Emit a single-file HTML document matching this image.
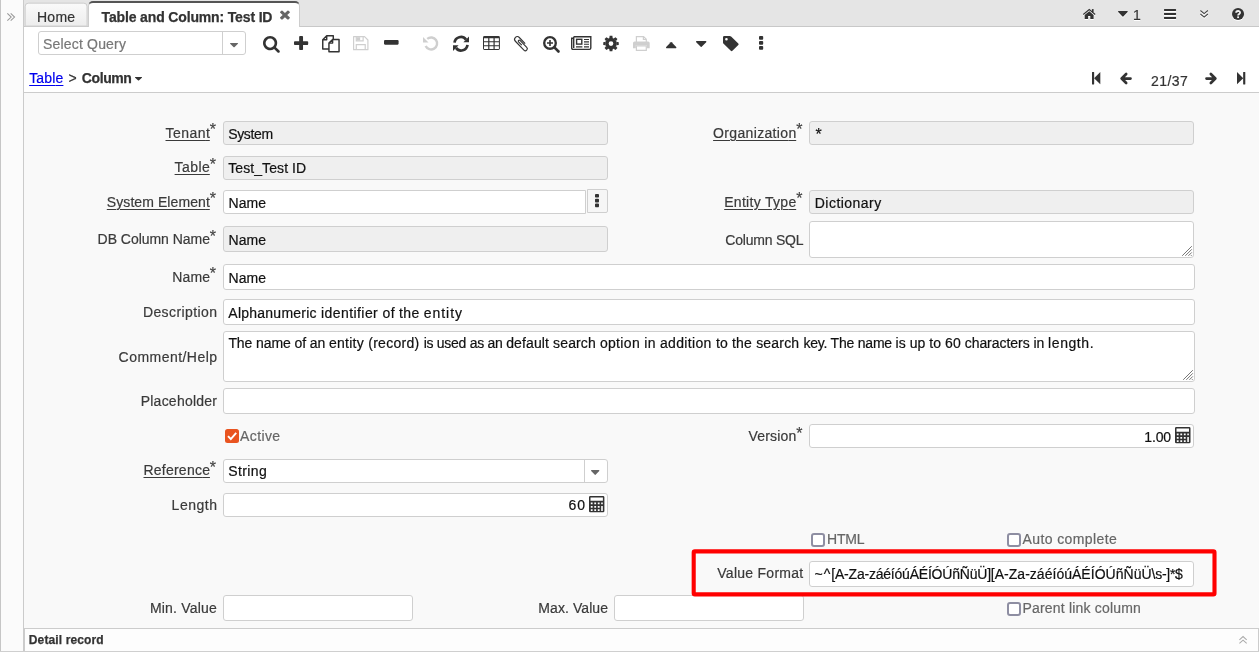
<!DOCTYPE html>
<html lang="en"><head><meta charset="utf-8"><title>Table and Column: Test ID</title>
<style>
html,body{margin:0;padding:0;background:#f9f9f9;}
body{width:1259px;height:652px;overflow:hidden;position:relative;font-family:"Liberation Sans", sans-serif;}
#app{position:absolute;left:0;top:0;width:1259px;height:652px;overflow:hidden;will-change:transform;}
#app div,#app svg,#app span{position:absolute;box-sizing:border-box;}
#app svg{overflow:visible;}
#app span{white-space:pre;line-height:20px;height:20px;-webkit-text-stroke:0.2px currentColor;}
#app span.u{text-decoration:underline;text-underline-offset:2px;text-decoration-thickness:1px;}
</style></head><body><div id="app">
<div style="left:24px;top:27px;width:1235px;height:65px;background:#fff;"></div>
<div style="left:24px;top:0px;width:1235px;height:27px;background:#e5e5e5;border-bottom:1px solid #c8c8c8;"></div>
<div style="left:0px;top:0px;width:24px;height:652px;background:#fbfbfb;border-right:1px solid #cbcbcb;border-left:1px solid #c6c6c6;"></div>
<svg style="left:6.9px;top:13px;color:#999" width="7.7" height="8.1" viewBox="0 0 7.7 8.1" preserveAspectRatio="none" fill="currentColor"><path d="M0.35 0.35 L4.2 4.05 L0.35 7.75 M3.7 0.35 L7.55 4.05 L3.7 7.75" fill="none" stroke="currentColor" stroke-width="1.05"/></svg>
<div style="left:25px;top:3px;width:63px;height:24px;background:linear-gradient(#fafafa,#ededed);border:1px solid #cfcfcf;border-radius:4px 4px 0 0;transform:translate(-0.4px,-0.4px);"></div>
<span id="t0" style="left:37px;top:6.7px;font-size:14px;color:#333;letter-spacing:0.247px;">Home</span>
<div style="left:88.4px;top:1px;width:211.2px;height:26px;background:#fff;border:1px solid #cdcdcd;border-top:2px solid #555;border-bottom:none;border-radius:5px 5px 0 0;"></div>
<span id="t1" style="left:101.6px;top:7px;font-size:14px;color:#333;font-weight:700;-webkit-text-stroke:0.25px currentColor;letter-spacing:-0.15px;">Table and Column: Test ID</span>
<svg style="left:280px;top:9.7px;color:#666" width="9.9" height="9.6" viewBox="302 302 1188 1252" preserveAspectRatio="none" fill="currentColor"><path d="M1490 1322q0 40-28 68l-136 136q-28 28-68 28t-68-28l-294-294-294 294q-28 28-68 28t-68-28l-136-136q-28-28-28-68t28-68l294-294-294-294q-28-28-28-68t28-68l136-136q28-28 68-28t68 28l294 294 294-294q28-28 68-28t68 28l136 136q28 28 28 68t-28 68l-294 294 294 294q28 28 28 68z"/></svg>
<svg style="left:1082.5px;top:8.95px;color:#333;filter:drop-shadow(0 1px 0 #fff)" width="12.5" height="10" viewBox="0 0 12.5 10" preserveAspectRatio="none" fill="currentColor"><path d="M0.3 5.5 L6.25 0.5 L12.2 5.5" fill="none" stroke="currentColor" stroke-width="1.1"/><path d="M1.7 6 L6.25 2.2 L10.6 6 V10 H7.3 V7 H5.1 V10 H1.7 Z"/><rect x="8.9" y="0.1" width="1.7" height="3.2"/></svg>
<svg style="left:1117.8px;top:11.4px;color:#333;filter:drop-shadow(0 1px 0 #fff)" width="9.8" height="5.6" viewBox="384 640 1024 576" preserveAspectRatio="none" fill="currentColor"><path d="M1408 704q0 26-19 45l-448 448q-19 19-45 19t-45-19l-448-448q-19-19-19-45t19-45 45-19h896q26 0 45 19t19 45z"/></svg>
<span id="t2" style="left:1132.9px;top:4.9px;font-size:14px;color:#333;text-shadow:0 1px 0 #fff;">1</span>
<svg style="left:1163.9px;top:9px;color:#333;filter:drop-shadow(0 1px 0 #fff)" width="12.1" height="9.9" viewBox="128 256 1536 1280" preserveAspectRatio="none" fill="currentColor"><path d="M1664 1344v128q0 26-19 45t-45 19h-1408q-26 0-45-19t-19-45v-128q0-26 19-45t45-19h1408q26 0 45 19t19 45zm0-512v128q0 26-19 45t-45 19h-1408q-26 0-45-19t-19-45v-128q0-26 19-45t45-19h1408q26 0 45 19t19 45zm0-512v128q0 26-19 45t-45 19h-1408q-26 0-45-19t-19-45v-128q0-26 19-45t45-19h1408q26 0 45 19t19 45z"/></svg>
<svg style="left:1199.9px;top:9.8px;color:#444;filter:drop-shadow(0 1px 0 #fff)" width="8.3" height="7.6" viewBox="0 0 8 7.6" preserveAspectRatio="none" fill="currentColor"><path d="M0.4 0.5 L4 3.6 L7.6 0.5 M0.4 4 L4 7.1 L7.6 4" fill="none" stroke="currentColor" stroke-width="1"/></svg>
<svg style="left:1232px;top:8px;color:#333;filter:drop-shadow(0 1px 0 #fff)" width="12.1" height="12.1" viewBox="0 0 12 12" preserveAspectRatio="none" fill="currentColor"><circle cx="6" cy="6" r="6"/><path d="M4.1 4.7 C4.1 2.4 8 2.4 8 4.6 C8 5.9 6.05 5.9 6.05 7.5" fill="none" stroke="#f0f0f0" stroke-width="1.8"/><rect x="5.15" y="8.3" width="1.8" height="1.7" fill="#f0f0f0"/></svg>
<div style="left:38px;top:31px;width:208px;height:24px;background:#fff;border:1px solid #cfcfcf;border-radius:3px;"></div>
<div style="left:222px;top:32px;width:1px;height:22px;background:#cfcfcf;"></div>
<svg style="left:230px;top:42.8px;color:#666" width="8.1" height="4.3" viewBox="384 640 1024 576" preserveAspectRatio="none" fill="currentColor"><path d="M1408 704q0 26-19 45l-448 448q-19 19-45 19t-45-19l-448-448q-19-19-19-45t19-45 45-19h896q26 0 45 19t19 45z"/></svg>
<span id="t3" style="left:43.1px;top:33.7px;font-size:14px;color:#777;letter-spacing:0.169px;">Select Query</span>
<svg style="left:262.8px;top:35.9px;color:#333" width="16.8" height="16.8" viewBox="64 128 1664 1664" preserveAspectRatio="none" fill="currentColor"><path d="M1216 832q0-185-131.500-316.500t-316.500-131.500-316.500 131.500-131.500 316.500 131.500 316.500 316.500 131.500 316.500-131.500 131.500-316.500zm512 832q0 52-38 90t-90 38q-54 0-90-38l-343-342q-179 124-399 124-143 0-273.500-55.500t-225-150-150-225-55.500-273.500 55.500-273.500 150-225 225-150 273.500-55.500 273.500 55.500 225 150 150 225 55.500 273.500q0 220-124 399l343 343q37 37 37 90z"/></svg>
<svg style="left:293.9px;top:35.9px;color:#333" width="14.2" height="14.1" viewBox="192 128 1408 1408" preserveAspectRatio="none" fill="currentColor"><path d="M1600 736v192q0 40-28 68t-68 28h-416v416q0 40-28 68t-68 28h-192q-40 0-68-28t-28-68v-416h-416q-40 0-68-28t-28-68v-192q0-40 28-68t68-28h416v-416q0-40 28-68t68-28h192q40 0 68 28t28 68v416h416q40 0 68 28t28 68z"/></svg>
<svg style="left:322px;top:34.6px;color:#333" width="17.8" height="17.5" viewBox="0 0 17.8 17.5" preserveAspectRatio="none" fill="currentColor"><path d="M4.7 0.75 H11.3 V4.2 M7 14 H0.75 V4.7 L4.7 0.75 V4.7 H0.75" fill="none" stroke="currentColor" stroke-width="1.45" stroke-linejoin="round"/><path d="M10.6 4.45 H17.05 V16.75 H6.95 V8.1 L10.6 4.45 V8.1 H6.95" fill="none" stroke="currentColor" stroke-width="1.45" stroke-linejoin="round"/></svg>
<svg style="left:353.2px;top:36.2px;color:#cfcfcf" width="15.5" height="14.3" viewBox="0 0 15.6 14.4" preserveAspectRatio="none" fill="currentColor"><path d="M0.6 0.6 H11.6 L15 4 V13.8 H0.6 Z" fill="none" stroke="currentColor" stroke-width="1.2" stroke-linejoin="round"/><path d="M3.3 0.6 V5 H10.2 V0.6 M3.3 13.8 V8.6 H12.3 V13.8" fill="none" stroke="currentColor" stroke-width="1.2"/><rect x="3.9" y="1.2" width="3.3" height="3.2"/></svg>
<svg style="left:383.9px;top:40.3px;color:#333" width="14.6" height="4.7" viewBox="192 640 1408 384" preserveAspectRatio="none" fill="currentColor"><path d="M1600 736v192q0 40-28 68t-68 28h-1216q-40 0-68-28t-28-68v-192q0-40 28-68t68-28h1216q40 0 68 28t28 68z"/></svg>
<svg style="left:423.1px;top:35.9px;color:#cfcfcf" width="15.3" height="14.9" viewBox="0 0 15.3 14.9" preserveAspectRatio="none" fill="currentColor"><path d="M4.24 2.85 A6 6 0 1 1 2.66 9.99" fill="none" stroke="currentColor" stroke-width="2.4"/><path d="M0 0.9 V6.4 H5.5 Z"/></svg>
<svg style="left:453.1px;top:35.7px;color:#333" width="16" height="15.5" viewBox="0 0 16 15.5" preserveAspectRatio="none" fill="currentColor"><path d="M1.5 6.6 A6.4 6.4 0 0 1 13 3.6" fill="none" stroke="currentColor" stroke-width="2.7"/><path d="M16 0.6 V6.2 H10.4 Z"/><path d="M14.5 8.9 A6.4 6.4 0 0 1 3 11.9" fill="none" stroke="currentColor" stroke-width="2.7"/><path d="M0 14.9 V9.3 H5.6 Z"/></svg>
<svg style="left:482.9px;top:35.9px;color:#333" width="16.9" height="14.1" viewBox="0 0 16.9 14.2" preserveAspectRatio="none" fill="currentColor"><path fill-rule="evenodd" d="M1.5 0 H15.4 Q16.9 0 16.9 1.5 V12.7 Q16.9 14.2 15.4 14.2 H1.5 Q0 14.2 0 12.7 V1.5 Q0 0 1.5 0 Z M1 2.3 V5.2 H5.2 V2.3 Z M6.4 2.3 V5.2 H10.5 V2.3 Z M11.7 2.3 V5.2 H15.9 V2.3 Z M1 6.3 V9.2 H5.2 V6.3 Z M6.4 6.3 V9.2 H10.5 V6.3 Z M11.7 6.3 V9.2 H15.9 V6.3 Z M1 10.3 V13.2 H5.2 V10.3 Z M6.4 10.3 V13.2 H10.5 V10.3 Z M11.7 10.3 V13.2 H15.9 V10.3 Z"/></svg>
<svg style="left:514.1px;top:35.7px;color:#333" width="14.3" height="15.5" viewBox="0 0 14.3 15.5" preserveAspectRatio="none" fill="currentColor"><g transform="translate(3.4 -0.45) rotate(46)"><path d="M11.2 0 H2.7 A2.7 2.7 0 0 0 2.7 5.4 H15.0 A1.95 1.95 0 0 0 15.0 1.5 H5.3 A1 1 0 0 0 5.3 3.5 H10" fill="none" stroke="currentColor" stroke-width="1.15"/></g></svg>
<svg style="left:542.8px;top:35.9px;color:#333" width="16.8" height="16.8" viewBox="0 0 16.8 16.8" preserveAspectRatio="none" fill="currentColor"><circle cx="7" cy="7" r="5.8" fill="none" stroke="currentColor" stroke-width="2.35"/><path d="M11.4 11.4 L15.5 15.5" stroke="currentColor" stroke-width="2.6" stroke-linecap="round"/><path d="M4 7 H10 M7 4 V10" stroke="currentColor" stroke-width="1.6"/></svg>
<svg style="left:570.7px;top:35.9px;color:#333" width="20.5" height="14.1" viewBox="0 0 20.5 14.1" preserveAspectRatio="none" fill="currentColor"><path d="M2.7 0.7 H19.8 V12 Q19.8 13.4 18.4 13.4 H2.1 Q0.7 13.4 0.7 12 V2.2 H2.7 M2.7 0.7 V12" fill="none" stroke="currentColor" stroke-width="1.4"/><rect x="5.6" y="3.3" width="5.2" height="4.8" fill="none" stroke="currentColor" stroke-width="1.4"/><path d="M13 3.5 H18 M13 5.9 H18 M13 8.3 H18 M5 10.9 H11.4 M13 10.9 H18" stroke="currentColor" stroke-width="1.15"/></svg>
<svg style="left:602.9px;top:35.9px;color:#333" width="16" height="15.2" viewBox="0 0 16 15.2" preserveAspectRatio="none" fill="currentColor"><path fill-rule="evenodd" d="M2.25 7.60 a5.75 5.75 0 1 0 11.50 0 a5.75 5.75 0 1 0 -11.50 0 Z M5.65 7.60 a2.35 2.35 0 1 1 4.70 0 a2.35 2.35 0 1 1 -4.70 0 Z"/><path d="M6.25 2.20 L6.65 -0.15 L9.35 -0.15 L9.75 2.20 Z"/><path d="M10.58 2.54 L12.53 1.17 L14.43 3.07 L13.06 5.02 Z"/><path d="M13.40 5.85 L15.75 6.25 L15.75 8.95 L13.40 9.35 Z"/><path d="M13.06 10.18 L14.43 12.13 L12.53 14.03 L10.58 12.66 Z"/><path d="M9.75 13.00 L9.35 15.35 L6.65 15.35 L6.25 13.00 Z"/><path d="M5.42 12.66 L3.47 14.03 L1.57 12.13 L2.94 10.18 Z"/><path d="M2.60 9.35 L0.25 8.95 L0.25 6.25 L2.60 5.85 Z"/><path d="M2.94 5.02 L1.57 3.07 L3.47 1.17 L5.42 2.54 Z"/></svg>
<svg style="left:633.2px;top:35.9px;color:#cfcfcf" width="16.7" height="14.9" viewBox="0 0 16.7 14.9" preserveAspectRatio="none" fill="currentColor"><path d="M3.4 6 V0.6 H10.6 L13.3 3.3 V6 M10.4 0.6 V3.5 H13.3" fill="none" stroke="currentColor" stroke-width="1.2"/><path d="M1.6 5.5 H15.1 Q16.7 5.5 16.7 7.1 V12.2 H13.9 V9.2 H2.8 V12.2 H0 V7.1 Q0 5.5 1.6 5.5 Z"/><path d="M3.4 9.8 H13.3 V14.3 H3.4 Z" fill="none" stroke="currentColor" stroke-width="1.2"/></svg>
<svg style="left:665.8px;top:41.6px;color:#333" width="10.4" height="6.3" viewBox="384 704 1024 576" preserveAspectRatio="none" fill="currentColor"><path d="M1408 1216q0 26-19 45t-45 19h-896q-26 0-45-19t-19-45 19-45l448-448q19-19 45-19t45 19l448 448q19 19 19 45z"/></svg>
<svg style="left:695.8px;top:41px;color:#333" width="10.4" height="6" viewBox="384 640 1024 576" preserveAspectRatio="none" fill="currentColor"><path d="M1408 704q0 26-19 45l-448 448q-19 19-45 19t-45-19l-448-448q-19-19-19-45t19-45 45-19h896q26 0 45 19t19 45z"/></svg>
<svg style="left:722.9px;top:35.9px;color:#333" width="15.8" height="15.3" viewBox="0 0 15.6 15.6" preserveAspectRatio="none" fill="currentColor"><path fill-rule="evenodd" d="M0 1.3 Q0 0 1.3 0 H6.6 Q7.4 0 8 0.6 L15.1 7.7 Q15.9 8.5 15.1 9.3 L9.3 15.1 Q8.5 15.9 7.7 15.1 L0.6 8 Q0 7.4 0 6.6 Z M3.4 2.1 A1.3 1.3 0 1 0 3.4 4.7 A1.3 1.3 0 1 0 3.4 2.1 Z"/></svg>
<svg style="left:758.9px;top:36.2px;color:#333" width="4.2" height="13.8" viewBox="704 128 384 1408" preserveAspectRatio="none" fill="currentColor"><path d="M1088 1248v192q0 40-28 68t-68 28h-192q-40 0-68-28t-28-68v-192q0-40 28-68t68-28h192q40 0 68 28t28 68zm0-512v192q0 40-28 68t-68 28h-192q-40 0-68-28t-28-68v-192q0-40 28-68t68-28h192q40 0 68 28t28 68zm0-512v192q0 40-28 68t-68 28h-192q-40 0-68-28t-28-68v-192q0-40 28-68t68-28h192q40 0 68 28t28 68z"/></svg>
<div style="left:24px;top:92px;width:1235px;height:1px;background:#cccccc;"></div>
<span id="t4" class="u" style="left:29.2px;top:67.8px;font-size:14px;color:#0000ee;letter-spacing:0.183px;">Tabl<i style="font-style:normal;letter-spacing:0">e</i></span>
<span id="t5" style="left:68.5px;top:67.8px;font-size:14px;color:#333;">&gt;</span>
<span id="t6" style="left:81.8px;top:67.8px;font-size:14px;color:#333;font-weight:700;-webkit-text-stroke:0.25px currentColor;letter-spacing:-0.402px;">Column</span>
<svg style="left:134.7px;top:77px;color:#333" width="7" height="3.6" viewBox="384 640 1024 576" preserveAspectRatio="none" fill="currentColor"><path d="M1408 704q0 26-19 45l-448 448q-19 19-45 19t-45-19l-448-448q-19-19-19-45t19-45 45-19h896q26 0 45 19t19 45z"/></svg>
<svg style="left:1091.9px;top:71.8px;color:#333" width="8.3" height="12.4" viewBox="0 0 8.3 12.4" preserveAspectRatio="none" fill="currentColor"><rect x="0" y="0" width="2.15" height="12.4" rx="0.3"/><path d="M8.3 0.1 L2.1 6.2 L8.3 12.3 Z"/></svg>
<svg style="left:1120.3px;top:72px;color:#333" width="12" height="13.1" viewBox="0 0 12 13.1" preserveAspectRatio="none" fill="currentColor"><path d="M10.5 6.55 H2 M6.15 2.05 L1.65 6.55 L6.15 11.05" fill="none" stroke="currentColor" stroke-width="2.7" stroke-linecap="round" stroke-linejoin="round"/></svg>
<span id="t7" style="left:1151px;top:70.8px;font-size:14px;color:#333;letter-spacing:0.413px;">21/37</span>
<svg style="left:1204.9px;top:72px;color:#333" width="12" height="13.1" viewBox="0 0 12 13.1" preserveAspectRatio="none" fill="currentColor"><path d="M1.5 6.55 H10 M5.85 2.05 L10.35 6.55 L5.85 11.05" fill="none" stroke="currentColor" stroke-width="2.7" stroke-linecap="round" stroke-linejoin="round"/></svg>
<svg style="left:1236.8px;top:71.8px;color:#333" width="8.3" height="12.4" viewBox="0 0 8.3 12.4" preserveAspectRatio="none" fill="currentColor"><rect x="6.15" y="0" width="2.15" height="12.4" rx="0.3"/><path d="M0 0.1 L6.2 6.2 L0 12.3 Z"/></svg>
<span id="t8" class="u" style="left:165.5px;top:122.8px;font-size:14px;color:#3a3a3a;letter-spacing:0.451px;">Tenan<i style="font-style:normal;letter-spacing:0">t</i></span>
<span id="t9" style="left:209.7px;top:120.3px;font-size:16px;color:#444;">*</span>
<div style="left:223px;top:121px;width:385px;height:24px;background:#efefef;border:1px solid #cfcfcf;border-radius:3px;"></div>
<span id="t10" style="left:228.2px;top:123.8px;font-size:14px;color:#111;letter-spacing:-0.338px;">System</span>
<span id="t11" class="u" style="left:713.1px;top:122.9px;font-size:14px;color:#3a3a3a;letter-spacing:0.337px;">Organizatio<i style="font-style:normal;letter-spacing:0">n</i></span>
<span id="t12" style="left:796.3px;top:120.3px;font-size:16px;color:#444;">*</span>
<div style="left:809px;top:121px;width:385px;height:24px;background:#efefef;border:1px solid #cfcfcf;border-radius:3px;"></div>
<span id="t13" style="left:815.5px;top:124.6px;font-size:16px;color:#111;">*</span>
<span id="t14" class="u" style="left:174.6px;top:157.2px;font-size:14px;color:#3a3a3a;letter-spacing:0.433px;">Tabl<i style="font-style:normal;letter-spacing:0">e</i></span>
<span id="t15" style="left:209.7px;top:154.7px;font-size:16px;color:#444;">*</span>
<div style="left:223px;top:156px;width:385px;height:24px;background:#efefef;border:1px solid #cfcfcf;border-radius:3px;"></div>
<span id="t16" style="left:228.2px;top:158.4px;font-size:14px;color:#111;letter-spacing:0.088px;">Test_Test ID</span>
<span id="t17" class="u" style="left:106.8px;top:191.8px;font-size:14px;color:#3a3a3a;letter-spacing:0.082px;">System Elemen<i style="font-style:normal;letter-spacing:0">t</i></span>
<span id="t18" style="left:209.7px;top:189.3px;font-size:16px;color:#444;">*</span>
<div style="left:223px;top:190px;width:363px;height:24px;background:#fff;border:1px solid #cfcfcf;border-radius:3px;border-radius:3px 0 0 3px;"></div>
<span id="t19" style="left:228.5px;top:192.7px;font-size:14px;color:#111;letter-spacing:0.08px;">Name</span>
<div style="left:586.5px;top:189px;width:21.5px;height:24px;background:#f6f6f6;border:1px solid #cfcfcf;border-radius:0 2px 2px 0;"></div>
<svg style="left:594.6px;top:194px;color:#333" width="4" height="13.2" viewBox="704 128 384 1408" preserveAspectRatio="none" fill="currentColor"><path d="M1088 1248v192q0 40-28 68t-68 28h-192q-40 0-68-28t-28-68v-192q0-40 28-68t68-28h192q40 0 68 28t28 68zm0-512v192q0 40-28 68t-68 28h-192q-40 0-68-28t-28-68v-192q0-40 28-68t68-28h192q40 0 68 28t28 68zm0-512v192q0 40-28 68t-68 28h-192q-40 0-68-28t-28-68v-192q0-40 28-68t68-28h192q40 0 68 28t28 68z"/></svg>
<span id="t20" class="u" style="left:724.2px;top:191.8px;font-size:14px;color:#3a3a3a;letter-spacing:0.298px;">Entity Typ<i style="font-style:normal;letter-spacing:0">e</i></span>
<span id="t21" style="left:796.3px;top:189.3px;font-size:16px;color:#444;">*</span>
<div style="left:809px;top:190px;width:385px;height:24px;background:#efefef;border:1px solid #cfcfcf;border-radius:3px;"></div>
<span id="t22" style="left:814.8px;top:192.7px;font-size:14px;color:#111;letter-spacing:0.461px;">Dictionary</span>
<span id="t23" style="left:97.6px;top:229.4px;font-size:14px;color:#3a3a3a;letter-spacing:-0.033px;">DB Column Name</span>
<span id="t24" style="left:209.7px;top:226.9px;font-size:16px;color:#444;">*</span>
<div style="left:223px;top:226px;width:385px;height:26px;background:#efefef;border:1px solid #cfcfcf;border-radius:3px;"></div>
<span id="t25" style="left:228.5px;top:229.9px;font-size:14px;color:#111;letter-spacing:0.08px;">Name</span>
<span id="t26" style="left:725.3px;top:229.6px;font-size:14px;color:#3a3a3a;letter-spacing:-0.206px;">Column SQL</span>
<div style="left:809px;top:221px;width:385px;height:37px;background:#fff;border:1px solid #cfcfcf;border-radius:3px;"></div>
<svg style="left:1182px;top:246px" width="10" height="10" viewBox="0 0 10 10"><path d="M9.8 0.2 L0.2 9.8 M9.8 3.3 L3.3 9.8 M9.8 6.4 L6.4 9.8 M9.8 9 L9 9.8" stroke="#666" stroke-width="0.9" fill="none"/></svg>
<span id="t27" style="left:172.3px;top:266.7px;font-size:14px;color:#3a3a3a;letter-spacing:0.114px;">Name</span>
<span id="t28" style="left:209.7px;top:264.2px;font-size:16px;color:#444;">*</span>
<div style="left:223px;top:264px;width:972px;height:26px;background:#fff;border:1px solid #cfcfcf;border-radius:3px;"></div>
<span id="t29" style="left:228.5px;top:267.5px;font-size:14px;color:#111;letter-spacing:0.08px;">Name</span>
<span id="t30" style="left:142.9px;top:302.2px;font-size:14px;color:#3a3a3a;letter-spacing:0.407px;">Description</span>
<div style="left:223px;top:299px;width:972px;height:26px;background:#fff;border:1px solid #cfcfcf;border-radius:3px;"></div>
<span id="t31" style="left:228.3px;top:303px;font-size:14px;color:#111;letter-spacing:0.246px;">Alphanumeric </span>
<span id="t32" style="left:321px;top:303px;font-size:14px;color:#111;letter-spacing:0.426px;">identifier </span>
<span id="t33" style="left:382.5px;top:303px;font-size:14px;color:#111;letter-spacing:0.34px;">of the </span>
<span id="t34" style="left:423.8px;top:303px;font-size:14px;color:#111;letter-spacing:0.946px;">entity</span>
<span id="t35" style="left:118.6px;top:346.8px;font-size:14px;color:#3a3a3a;letter-spacing:0.457px;">Comment/Help</span>
<div style="left:223px;top:331px;width:972px;height:51px;background:#fff;border:1px solid #cfcfcf;border-radius:3px;"></div>
<svg style="left:1183px;top:370px" width="10" height="10" viewBox="0 0 10 10"><path d="M9.8 0.2 L0.2 9.8 M9.8 3.3 L3.3 9.8 M9.8 6.4 L6.4 9.8 M9.8 9 L9 9.8" stroke="#666" stroke-width="0.9" fill="none"/></svg>
<span id="t36" style="left:228.4px;top:333px;font-size:14px;color:#111;letter-spacing:-0.097px;">The name of an </span>
<span id="t37" style="left:328.9px;top:333px;font-size:14px;color:#111;letter-spacing:0.284px;">entity (record) </span>
<span id="t38" style="left:423.7px;top:333px;font-size:14px;color:#111;letter-spacing:-0.278px;">is used as an </span>
<span id="t39" style="left:506.2px;top:333px;font-size:14px;color:#111;letter-spacing:0.124px;">default search </span>
<span id="t40" style="left:599.9px;top:333px;font-size:14px;color:#111;letter-spacing:0.328px;">option in addition </span>
<span id="t41" style="left:715.9px;top:333px;font-size:14px;color:#111;letter-spacing:0.191px;">to the search </span>
<span id="t42" style="left:803.4px;top:333px;font-size:14px;color:#111;letter-spacing:-0.215px;">key. The name </span>
<span id="t43" style="left:895.6px;top:333px;font-size:14px;color:#111;letter-spacing:0.05px;">is up to 60 </span>
<span id="t44" style="left:964.7px;top:333px;font-size:14px;color:#111;letter-spacing:-0.046px;">characters in </span>
<span id="t45" style="left:1048.1px;top:333px;font-size:14px;color:#111;letter-spacing:0.576px;">length.</span>
<span id="t46" style="left:140.7px;top:390.9px;font-size:14px;color:#3a3a3a;letter-spacing:0.236px;">Placeholder</span>
<div style="left:223px;top:388px;width:972px;height:26px;background:#fff;border:1px solid #cfcfcf;border-radius:3px;"></div>
<div style="left:225px;top:429px;width:14px;height:14px;background:#e95420;border-radius:2.5px;"></div>
<svg style="left:225px;top:429px;color:#fff" width="14" height="14" viewBox="0 0 14 14" preserveAspectRatio="none" fill="currentColor"><path d="M3 7.2 L5.8 10 L11.2 3.8" fill="none" stroke="#fff" stroke-width="1.9"/></svg>
<span id="t47" style="left:240.1px;top:425.5px;font-size:14px;color:#666;letter-spacing:0.375px;">Active</span>
<span id="t48" style="left:748.5px;top:426px;font-size:14px;color:#3a3a3a;letter-spacing:0.199px;">Version</span>
<span id="t49" style="left:796.3px;top:423.5px;font-size:16px;color:#444;">*</span>
<div style="left:809px;top:424px;width:385px;height:24px;background:#fff;border:1px solid #cfcfcf;border-radius:3px;"></div>
<span id="t50" style="left:1144.3px;top:427px;font-size:14px;color:#111;letter-spacing:-0.15px;">1.00</span>
<svg style="left:1175.2px;top:426.9px;color:#333" width="15.5" height="16.3" viewBox="0 0 15.4 16.2" preserveAspectRatio="none" fill="currentColor"><path fill-rule="evenodd" d="M1.3 0 H14.1 Q15.4 0 15.4 1.3 V14.9 Q15.4 16.2 14.1 16.2 H1.3 Q0 16.2 0 14.9 V1.3 Q0 0 1.3 0 Z M1.5 1.5 V4.6 H13.9 V1.5 Z M1.8 6.5 V8.2 H3.6 V6.5 Z M5.3 6.5 V8.2 H7.1 V6.5 Z M8.8 6.5 V8.2 H10.6 V6.5 Z M12.2 6.5 V8.2 H13.8 V6.5 Z M1.8 9.9 V11.6 H3.6 V9.9 Z M5.3 9.9 V11.6 H7.1 V9.9 Z M8.8 9.9 V11.6 H10.6 V9.9 Z M12.2 9.9 V14.9 H13.8 V9.9 Z M1.8 13.2 V14.9 H3.6 V13.2 Z M5.3 13.2 V14.9 H7.1 V13.2 Z M8.8 13.2 V14.9 H10.6 V13.2 Z"/></svg>
<span id="t51" class="u" style="left:143.5px;top:459.9px;font-size:14px;color:#3a3a3a;letter-spacing:0.226px;">Referenc<i style="font-style:normal;letter-spacing:0">e</i></span>
<span id="t52" style="left:209.7px;top:457.5px;font-size:16px;color:#444;">*</span>
<div style="left:223px;top:459px;width:385px;height:24px;background:#fff;border:1px solid #cfcfcf;border-radius:3px;"></div>
<span id="t53" style="left:228.2px;top:460.8px;font-size:14px;color:#111;letter-spacing:0.384px;">String</span>
<div style="left:584px;top:460px;width:1px;height:22px;background:#cfcfcf;"></div>
<svg style="left:591.4px;top:469.8px;color:#666" width="8.4" height="4.9" viewBox="384 640 1024 576" preserveAspectRatio="none" fill="currentColor"><path d="M1408 704q0 26-19 45l-448 448q-19 19-45 19t-45-19l-448-448q-19-19-19-45t19-45 45-19h896q26 0 45 19t19 45z"/></svg>
<span id="t54" style="left:171.6px;top:494.8px;font-size:14px;color:#3a3a3a;letter-spacing:0.514px;">Length</span>
<div style="left:223px;top:493px;width:385px;height:24px;background:#fff;border:1px solid #cfcfcf;border-radius:3px;"></div>
<span id="t55" style="left:568.6px;top:495.4px;font-size:14px;color:#111;letter-spacing:0.822px;">60</span>
<svg style="left:588.7px;top:495.8px;color:#333" width="15.4" height="16.3" viewBox="0 0 15.4 16.2" preserveAspectRatio="none" fill="currentColor"><path fill-rule="evenodd" d="M1.3 0 H14.1 Q15.4 0 15.4 1.3 V14.9 Q15.4 16.2 14.1 16.2 H1.3 Q0 16.2 0 14.9 V1.3 Q0 0 1.3 0 Z M1.5 1.5 V4.6 H13.9 V1.5 Z M1.8 6.5 V8.2 H3.6 V6.5 Z M5.3 6.5 V8.2 H7.1 V6.5 Z M8.8 6.5 V8.2 H10.6 V6.5 Z M12.2 6.5 V8.2 H13.8 V6.5 Z M1.8 9.9 V11.6 H3.6 V9.9 Z M5.3 9.9 V11.6 H7.1 V9.9 Z M8.8 9.9 V11.6 H10.6 V9.9 Z M12.2 9.9 V14.9 H13.8 V9.9 Z M1.8 13.2 V14.9 H3.6 V13.2 Z M5.3 13.2 V14.9 H7.1 V13.2 Z M8.8 13.2 V14.9 H10.6 V13.2 Z"/></svg>
<div style="left:811px;top:533px;width:14px;height:14px;background:#fff;border:2px solid #8e8ea2;border-radius:3px;"></div>
<span id="t56" style="left:827.1px;top:529px;font-size:14px;color:#666;letter-spacing:-0.208px;">HTML</span>
<div style="left:1007px;top:533px;width:14px;height:14px;background:#fff;border:2px solid #8e8ea2;border-radius:3px;"></div>
<span id="t57" style="left:1022.5px;top:528.7px;font-size:14px;color:#666;letter-spacing:0.392px;">Auto complete</span>
<span id="t58" style="left:149.9px;top:597.7px;font-size:14px;color:#3a3a3a;letter-spacing:0.188px;">Min. Value</span>
<div style="left:223px;top:595px;width:190px;height:26px;background:#fff;border:1px solid #cfcfcf;border-radius:3px;"></div>
<span id="t59" style="left:538.3px;top:597.7px;font-size:14px;color:#3a3a3a;letter-spacing:0.078px;">Max. Value</span>
<div style="left:614px;top:595px;width:190px;height:26px;background:#fff;border:1px solid #cfcfcf;border-radius:3px;"></div>
<div style="left:1007px;top:602px;width:14px;height:14px;background:#fff;border:2px solid #8e8ea2;border-radius:3px;"></div>
<span id="t60" style="left:1022.5px;top:597.8px;font-size:14px;color:#666;letter-spacing:0.19px;">Parent link column</span>
<svg style="left:685px;top:545px" width="540" height="56" viewBox="685 545 540 56"><rect x="693.7" y="551.35" width="520.8" height="43.05" rx="1.2" fill="#f9f9f9" stroke="#ff0000" stroke-width="4.1"/></svg>
<span id="t61" style="left:717.3px;top:562.7px;font-size:14px;color:#3a3a3a;letter-spacing:0.264px;">Value Format</span>
<div style="left:809px;top:561px;width:385px;height:26px;background:#fff;border:1px solid #cfcfcf;border-radius:3px;"></div>
<span id="t62" style="left:814.6px;top:563.6px;font-size:14px;color:#111;letter-spacing:0.975px;">~^</span>
<span id="t63" style="left:831.3px;top:563.6px;font-size:14px;color:#111;letter-spacing:-0.212px;">[A-Za-záéíóúÁÉÍÓÚñÑüÜ]</span>
<span id="t64" style="left:990.8px;top:563.6px;font-size:14px;color:#111;letter-spacing:0.024px;">[A-Za-záéíóúÁÉÍÓÚñÑüÜ</span>
<span id="t65" style="left:1151.6px;top:563.6px;font-size:14px;color:#111;letter-spacing:-0.288px;">\s-]</span>
<span id="t66" style="left:1169.9px;top:563.6px;font-size:14px;color:#111;letter-spacing:-0.434px;">*$</span>
<div style="left:24px;top:628px;width:1235px;height:24px;background:#fdfdfd;border:1px solid #cccccc;"></div>
<div style="left:0px;top:651px;width:1259px;height:1px;background:#cfcfcf;"></div>
<span id="t67" style="left:28.8px;top:629.6px;font-size:12px;color:#333;font-weight:700;-webkit-text-stroke:0.25px currentColor;letter-spacing:0.128px;">Detail record</span>
<svg style="left:1239.2px;top:636px;color:#aaa" width="8.1" height="8" viewBox="0 0 8 7.6" preserveAspectRatio="none" fill="currentColor"><path d="M0.4 3.6 L4 0.5 L7.6 3.6 M0.4 7.1 L4 4 L7.6 7.1" fill="none" stroke="currentColor" stroke-width="1"/></svg>
</div></body></html>
